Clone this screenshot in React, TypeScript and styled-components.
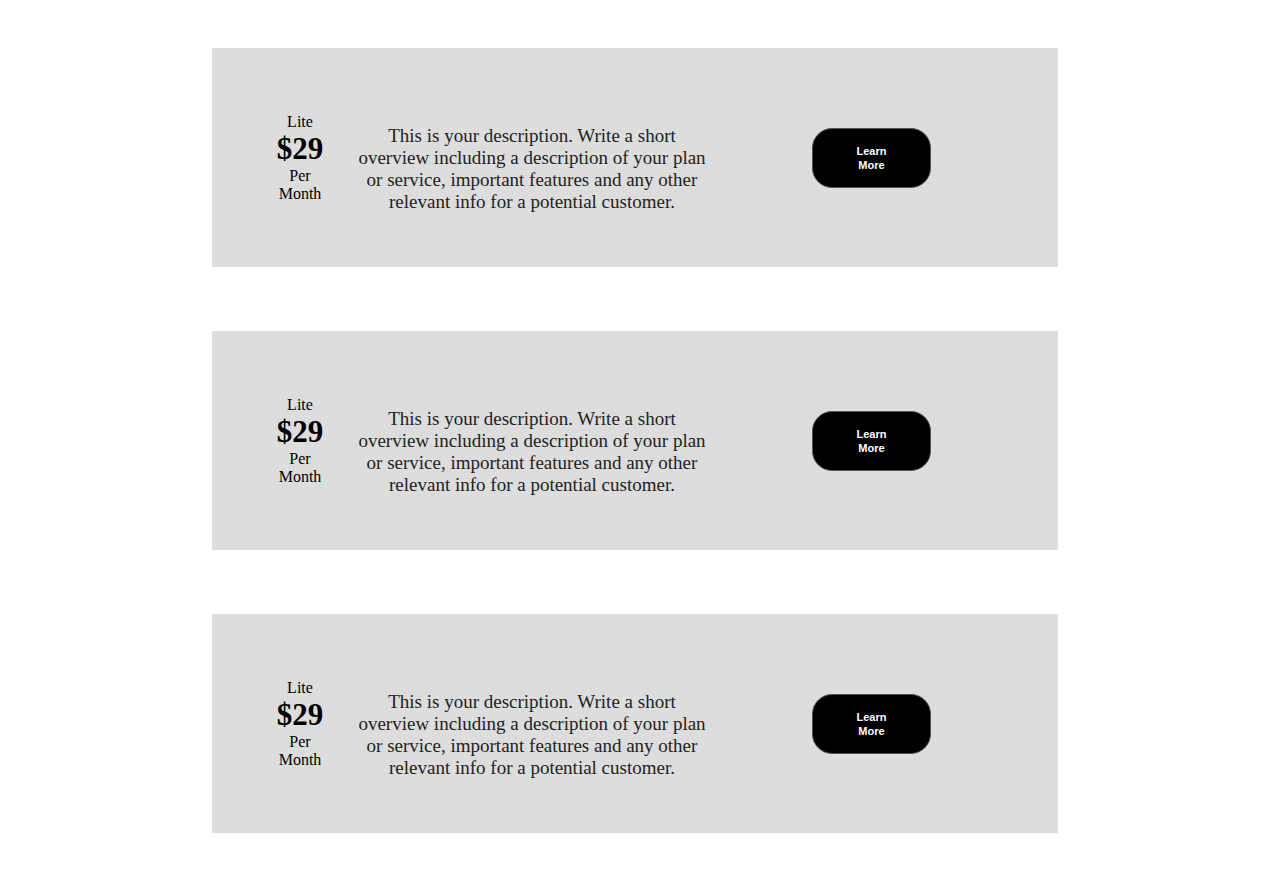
import React from "react";
import styled, { createGlobalStyle } from "styled-components";

const Global = createGlobalStyle`
  html, body { margin: 0; padding: 0; background: #ffffff; }
  body { font-family: "Liberation Serif", "Times New Roman", serif; }
`;

const Page = styled.main`
  width: 846px;
  margin: 0 auto;
  padding: 48px 0 48px 0;
  display: flex;
  flex-direction: column;
  gap: 64px;
`;

const Card = styled.section`
  height: 219px;
  background: #dddddd;
  display: flex;
  align-items: center;
  padding-left: 58px;
  box-sizing: border-box;
`;

const PriceCol = styled.div`
  width: 60px;
  display: flex;
  flex-direction: column;
  align-items: center;
  text-align: center;
  color: #000;
  font-family: "Liberation Serif", serif;
`;

const PlanName = styled.div`
  font-size: 16px;
  line-height: 18px;
`;

const Price = styled.div`
  font-size: 31px;
  font-weight: 700;
  line-height: 36px;
`;

const Period = styled.div`
  font-size: 16px;
  line-height: 18px;
  width: 50px;
`;

const Description = styled.p`
  margin: 0 0 0 22px;
  width: 360px;
  padding-top: 22px;
  font-family: "Liberation Serif", serif;
  font-size: 19px;
  line-height: 22px;
  text-align: center;
  color: #222;
`;

const Button = styled.button`
  margin-left: 100px;
  width: 119px;
  height: 60px;
  border-radius: 20px;
  border: 1px solid #555;
  background: #000;
  color: #fff;
  font-family: "Liberation Sans", Arial, sans-serif;
  font-weight: 700;
  font-size: 11px;
  line-height: 14px;
  padding: 0 40px;
  box-sizing: border-box;
  cursor: pointer;
`;

const plans = [0, 1, 2];

export default function App() {
  return (
    <>
      <Global />
      <Page>
        {plans.map((i) => (
          <Card key={i}>
            <PriceCol>
              <PlanName>Lite</PlanName>
              <Price>$29</Price>
              <Period>Per Month</Period>
            </PriceCol>
            <Description>
              This is your description. Write a short overview including a
              description of your plan or service, important features and any
              other relevant info for a potential customer.
            </Description>
            <Button>Learn More</Button>
          </Card>
        ))}
      </Page>
    </>
  );
}
